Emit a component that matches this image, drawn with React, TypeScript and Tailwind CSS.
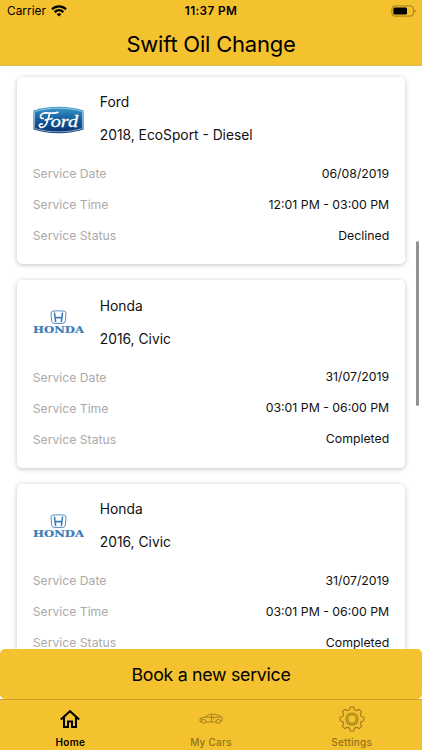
import React from 'react';

interface Service {
    id: number;
    make: 'Ford' | 'Honda';
    model: string;
    date: string;
    time: string;
    status: string;
}

const SERVICES: Service[] = [
    { id: 1, make: 'Ford', model: '2018, EcoSport - Diesel', date: '06/08/2019', time: '12:01 PM - 03:00 PM', status: 'Declined' },
    { id: 2, make: 'Honda', model: '2016, Civic', date: '31/07/2019', time: '03:01 PM - 06:00 PM', status: 'Completed' },
    { id: 3, make: 'Honda', model: '2016, Civic', date: '31/07/2019', time: '03:01 PM - 06:00 PM', status: 'Completed' },
];

const WifiIcon = () => (
    <svg className="h-[12px] w-[16px]" viewBox="0 0 16 12" fill="none" stroke="#000" strokeWidth="2.3">
        <path d="M1 4.3C5 .4 11 .4 15 4.3" />
        <path d="M3.6 7.1C6.2 4.6 9.8 4.6 12.4 7.1" />
        <path d="M8 11.6 5.5 9.1C6.9 7.9 9.1 7.9 10.5 9.1Z" fill="#000" stroke="none" />
    </svg>
);

const BatteryIcon = () => (
    <svg className="h-[12px] w-[26px]" viewBox="0 0 26 12">
        <rect x="0.9" y="0.9" width="21.4" height="10.2" rx="2.8" fill="none" stroke="#96761d" strokeWidth="0.9" />
        <rect x="2.4" y="2.4" width="13.6" height="7.2" rx="1.4" fill="#000" />
        <path d="M23.6 4.2c1.5.6 1.5 3 0 3.6Z" fill="#96761d" />
    </svg>
);

const FordLogo = () => (
    <svg className="h-[28px] w-[51px]" viewBox="0 0 52 28" preserveAspectRatio="none">
        <defs>
            <linearGradient id="ford" x1="0" y1="0" x2="0" y2="1">
                <stop offset="0" stopColor="#3d9ccb" />
                <stop offset="0.45" stopColor="#14609f" />
                <stop offset="1" stopColor="#07306f" />
            </linearGradient>
        </defs>
        <path d="M.5 4.5C16 -.4 36 -.4 51.5 4.5V23.5C36 28.4 16 28.4 .5 23.5Z" fill="url(#ford)" />
        <path d="M1.6 5.5C17 1 35 1 50.4 5.5V22.5C35 27 17 27 1.6 22.5Z" fill="none" stroke="#c4deed" strokeWidth="0.7" />
        {/* swash of the F */}
        <path d="M10.5 12.3C5.5 13 7 6.6 14 6.8C18 7 22 8 25.5 6.3M9.5 18C5 17.5 5.8 21.8 9.5 21.3C13 20.8 14.5 17 17 7.5M12.5 14C15 13 17 13.5 19.5 12.5" fill="none" stroke="#fff" strokeWidth="1.7" strokeLinecap="round" />
        <text x="18" y="20.8" textLength="28" lengthAdjust="spacingAndGlyphs" fill="#fff" stroke="#fff" strokeWidth="0.3" fontFamily="'Liberation Serif', serif" fontSize="17.5" fontStyle="italic">ord</text>
    </svg>
);

const HondaLogo = () => (
    <svg className="mt-px h-[25px] w-[51px]" viewBox="0 0 52 25" preserveAspectRatio="none" fill="none" stroke="#3b7db8">
        <path d="M20 1.2C24 .7 28 .7 32 1.2Q33.7 1.5 33.6 3.2L33 10.8Q32.6 13.3 30.5 13.4H21.5Q19.4 13.3 19 10.8L18.4 3.2Q18.3 1.5 20 1.2Z" strokeWidth="0.9" />
        <path d="M21.9 2.6C22.3 6 22.5 9 23.2 12M30.1 2.6C29.7 6 29.5 9 28.8 12M23 7.6H29" strokeWidth="1.6" />
        <text x="0" y="23.5" textLength="52" lengthAdjust="spacingAndGlyphs" fill="#3b7db8" strokeWidth="0.2" fontFamily="'DejaVu Serif', serif" fontSize="8.6" fontWeight="700">HONDA</text>
    </svg>
);

const HomeIcon = () => (
    <svg className="h-[20px] w-[20px]" viewBox="0 0 20 20" fill="none" stroke="#000" strokeWidth="2">
        <path d="M.8 10.4 10 2.2 19.2 10.4" />
        <path d="M4 8V18H8V12.5H12V18H16V8" />
    </svg>
);

const CarIcon = () => (
    <svg className="h-[11px] w-[24px]" viewBox="0 0 26 12" fill="none" stroke="#9d7b1c" strokeWidth="1">
        <path d="M3 9.7H1.5Q.7 9 1 6.5Q2 4.9 6.7 4.4Q10 1.5 13.5 1.2Q18.5 .8 22 3.2L24.5 4Q25.6 6.5 25 8.7L23 9.5" />
        <path d="M7.3 9.8H18.6M6.7 4.6H23M13.5 1.3V9.5M1.5 6.5H3.5M15 6.2H16.5" />
        <circle cx="5.1" cy="9.1" r="2.2" />
        <circle cx="20.8" cy="9.1" r="2.2" />
    </svg>
);

const TEETH = [0, 45, 90, 135, 180, 225, 270, 315];

const polar = (r: number, deg: number) => {
    const a = (deg * Math.PI) / 180;
    return `${(r * Math.cos(a)).toFixed(2)} ${(r * Math.sin(a)).toFixed(2)}`;
};

const gearPath =
    TEETH.map((t, i) =>
        `${i ? 'L' : 'M'}${polar(9.9, t - 13)}L${polar(11.6, t - 10)}Q${polar(12, t - 9)} ${polar(12, t - 6)}` +
        `L${polar(12, t + 6)}Q${polar(12, t + 9)} ${polar(11.6, t + 10)}L${polar(9.9, t + 13)}Q${polar(9, t + 22.5)} ${polar(9.9, t + 32)}`
    ).join('') + 'Z';

const GearIcon = () => (
    <svg className="h-[26px] w-[26px]" viewBox="-13 -13 26 26" fill="none" stroke="#9d7b1c" strokeWidth="1.1">
        <path d={gearPath} />
        <circle r="6" />
        <circle r="4.2" />
    </svg>
);

const Row = ({ label, value }: { label: string; value: string }) => (
    <div className="flex h-[31px] items-center justify-between">
        <span className="text-[12.2px] text-[#aaaaaa]">{label}</span>
        <span className="text-[12.3px] text-[#111111]">{value}</span>
    </div>
);

const ServiceCard = ({ service }: { service: Service }) => (
    <div className="h-[187.5px] shrink-0 rounded-[5px] bg-white px-4 shadow-[0_1px_5px_rgba(0,0,0,0.24)]">
        <div className="flex h-[81.9px]">
            <div className="flex w-[51px] justify-center pt-[29px]">
                {service.make === 'Ford' ? <FordLogo /> : <HondaLogo />}
            </div>
            <div className="ml-4 pt-[9.4px] text-[13.8px] leading-[33px] text-[#111111]">
                <p>{service.make}</p>
                <p>{service.model}</p>
            </div>
        </div>
        <Row label="Service Date" value={service.date} />
        <Row label="Service Time" value={service.time} />
        <Row label="Service Status" value={service.status} />
    </div>
);

export default function App() {
    return (
        <div className="relative flex h-[750px] w-[422px] flex-col overflow-hidden bg-white font-['Inter',sans-serif] text-black">
            <header className="h-[66px] shrink-0 border-b border-[#d9bc62] bg-[#f4c22f]">
                <div className="grid h-[22px] grid-cols-3 items-center">
                    <div className="flex items-center gap-[5px] pl-[7px] text-[11.9px]">
                        <span>Carrier</span>
                        <WifiIcon />
                    </div>
                    <span className="pt-[2px] text-center text-[11.8px] font-semibold tracking-[0.35px]">11:37 PM</span>
                    <div className="flex justify-end pr-[5px]">
                        <BatteryIcon />
                    </div>
                </div>
                <h1 className="text-center text-[22px] leading-[44px] tracking-[-0.22px]">Swift Oil Change</h1>
            </header>

            {/* Service list */}
            <main className="flex min-h-0 flex-1 flex-col gap-[16.2px] overflow-hidden px-[16.8px] pt-[10.6px]">
                {SERVICES.map((service) => (
                    <ServiceCard key={service.id} service={service} />
                ))}
            </main>

            {/* Scroll indicator */}
            <div className="absolute top-[241px] right-[3px] h-[165px] w-[3px] rounded-full bg-[#929292]" />

            <div className="shrink-0 bg-white">
                <button className="block h-[50px] w-full rounded-[5px] bg-[#f4c22f] pt-[2px] text-[17.8px] tracking-[-0.3px]">Book a new service</button>
            </div>

            <nav className="grid h-[51px] shrink-0 grid-cols-3 border-t border-[#c99f27] bg-[#f4c22f] text-[10px] tracking-[0.25px] text-[#927219]">
                <div className="flex flex-col items-center font-semibold text-black">
                    <div className="flex h-[37px] items-center"><HomeIcon /></div>
                    <span className="leading-[11px]">Home</span>
                </div>
                <div className="flex flex-col items-center font-medium">
                    <div className="flex h-[37px] items-center"><CarIcon /></div>
                    <span className="leading-[11px]">My Cars</span>
                </div>
                <div className="flex flex-col items-center font-medium">
                    <div className="flex h-[37px] items-center"><GearIcon /></div>
                    <span className="leading-[11px]">Settings</span>
                </div>
            </nav>
        </div>
    );
}
